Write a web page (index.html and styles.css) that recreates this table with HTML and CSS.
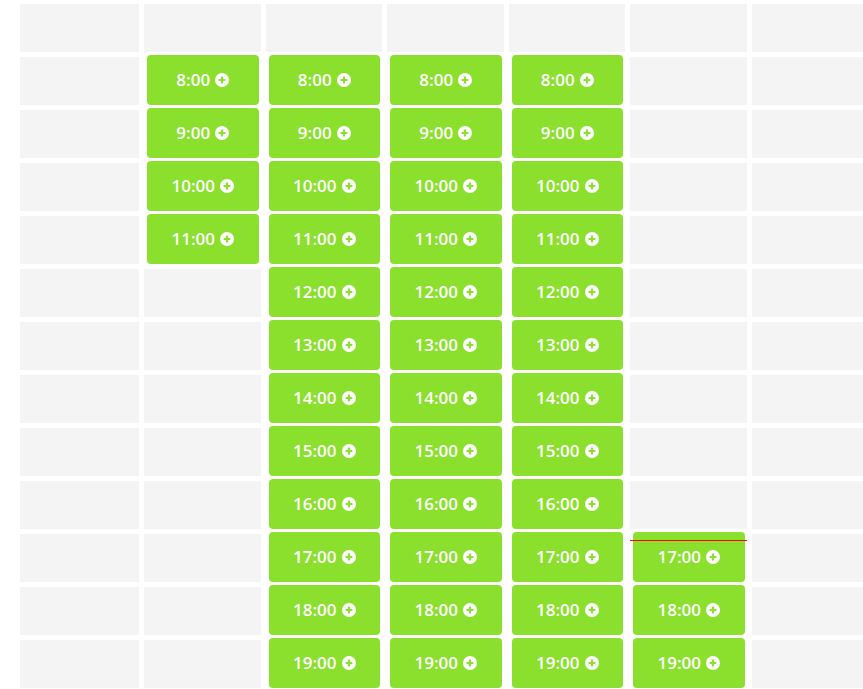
FILE: index.html
```html
<!DOCTYPE html>
<html lang="en">
<head>
<meta charset="utf-8">
<title>Schedule</title>
<link rel="stylesheet" href="styles.css">
</head>
<body>
<div class="grid">
  <!-- header row -->
  <div class="cell"></div><div class="cell"></div><div class="cell"></div><div class="cell"></div><div class="cell"></div><div class="cell"></div><div class="cell"></div>

  <!-- 8:00 -->
  <div class="cell"></div>
  <div class="slot-cell"><button class="slot">8:00 <svg class="plus" viewBox="0 0 14 14"><circle cx="7" cy="7" r="7"/><path d="M7 3.6v6.8M3.6 7h6.8"/></svg></button></div>
  <div class="slot-cell"><button class="slot">8:00 <svg class="plus" viewBox="0 0 14 14"><circle cx="7" cy="7" r="7"/><path d="M7 3.6v6.8M3.6 7h6.8"/></svg></button></div>
  <div class="slot-cell"><button class="slot">8:00 <svg class="plus" viewBox="0 0 14 14"><circle cx="7" cy="7" r="7"/><path d="M7 3.6v6.8M3.6 7h6.8"/></svg></button></div>
  <div class="slot-cell"><button class="slot">8:00 <svg class="plus" viewBox="0 0 14 14"><circle cx="7" cy="7" r="7"/><path d="M7 3.6v6.8M3.6 7h6.8"/></svg></button></div>
  <div class="cell"></div><div class="cell"></div>

  <!-- 9:00 -->
  <div class="cell"></div>
  <div class="slot-cell"><button class="slot">9:00 <svg class="plus" viewBox="0 0 14 14"><circle cx="7" cy="7" r="7"/><path d="M7 3.6v6.8M3.6 7h6.8"/></svg></button></div>
  <div class="slot-cell"><button class="slot">9:00 <svg class="plus" viewBox="0 0 14 14"><circle cx="7" cy="7" r="7"/><path d="M7 3.6v6.8M3.6 7h6.8"/></svg></button></div>
  <div class="slot-cell"><button class="slot">9:00 <svg class="plus" viewBox="0 0 14 14"><circle cx="7" cy="7" r="7"/><path d="M7 3.6v6.8M3.6 7h6.8"/></svg></button></div>
  <div class="slot-cell"><button class="slot">9:00 <svg class="plus" viewBox="0 0 14 14"><circle cx="7" cy="7" r="7"/><path d="M7 3.6v6.8M3.6 7h6.8"/></svg></button></div>
  <div class="cell"></div><div class="cell"></div>

  <!-- 10:00 -->
  <div class="cell"></div>
  <div class="slot-cell"><button class="slot">10:00 <svg class="plus" viewBox="0 0 14 14"><circle cx="7" cy="7" r="7"/><path d="M7 3.6v6.8M3.6 7h6.8"/></svg></button></div>
  <div class="slot-cell"><button class="slot">10:00 <svg class="plus" viewBox="0 0 14 14"><circle cx="7" cy="7" r="7"/><path d="M7 3.6v6.8M3.6 7h6.8"/></svg></button></div>
  <div class="slot-cell"><button class="slot">10:00 <svg class="plus" viewBox="0 0 14 14"><circle cx="7" cy="7" r="7"/><path d="M7 3.6v6.8M3.6 7h6.8"/></svg></button></div>
  <div class="slot-cell"><button class="slot">10:00 <svg class="plus" viewBox="0 0 14 14"><circle cx="7" cy="7" r="7"/><path d="M7 3.6v6.8M3.6 7h6.8"/></svg></button></div>
  <div class="cell"></div><div class="cell"></div>

  <!-- 11:00 -->
  <div class="cell"></div>
  <div class="slot-cell"><button class="slot">11:00 <svg class="plus" viewBox="0 0 14 14"><circle cx="7" cy="7" r="7"/><path d="M7 3.6v6.8M3.6 7h6.8"/></svg></button></div>
  <div class="slot-cell"><button class="slot">11:00 <svg class="plus" viewBox="0 0 14 14"><circle cx="7" cy="7" r="7"/><path d="M7 3.6v6.8M3.6 7h6.8"/></svg></button></div>
  <div class="slot-cell"><button class="slot">11:00 <svg class="plus" viewBox="0 0 14 14"><circle cx="7" cy="7" r="7"/><path d="M7 3.6v6.8M3.6 7h6.8"/></svg></button></div>
  <div class="slot-cell"><button class="slot">11:00 <svg class="plus" viewBox="0 0 14 14"><circle cx="7" cy="7" r="7"/><path d="M7 3.6v6.8M3.6 7h6.8"/></svg></button></div>
  <div class="cell"></div><div class="cell"></div>

  <!-- 12:00 -->
  <div class="cell"></div><div class="cell"></div>
  <div class="slot-cell"><button class="slot">12:00 <svg class="plus" viewBox="0 0 14 14"><circle cx="7" cy="7" r="7"/><path d="M7 3.6v6.8M3.6 7h6.8"/></svg></button></div>
  <div class="slot-cell"><button class="slot">12:00 <svg class="plus" viewBox="0 0 14 14"><circle cx="7" cy="7" r="7"/><path d="M7 3.6v6.8M3.6 7h6.8"/></svg></button></div>
  <div class="slot-cell"><button class="slot">12:00 <svg class="plus" viewBox="0 0 14 14"><circle cx="7" cy="7" r="7"/><path d="M7 3.6v6.8M3.6 7h6.8"/></svg></button></div>
  <div class="cell"></div><div class="cell"></div>

  <!-- 13:00 -->
  <div class="cell"></div><div class="cell"></div>
  <div class="slot-cell"><button class="slot">13:00 <svg class="plus" viewBox="0 0 14 14"><circle cx="7" cy="7" r="7"/><path d="M7 3.6v6.8M3.6 7h6.8"/></svg></button></div>
  <div class="slot-cell"><button class="slot">13:00 <svg class="plus" viewBox="0 0 14 14"><circle cx="7" cy="7" r="7"/><path d="M7 3.6v6.8M3.6 7h6.8"/></svg></button></div>
  <div class="slot-cell"><button class="slot">13:00 <svg class="plus" viewBox="0 0 14 14"><circle cx="7" cy="7" r="7"/><path d="M7 3.6v6.8M3.6 7h6.8"/></svg></button></div>
  <div class="cell"></div><div class="cell"></div>

  <!-- 14:00 -->
  <div class="cell"></div><div class="cell"></div>
  <div class="slot-cell"><button class="slot">14:00 <svg class="plus" viewBox="0 0 14 14"><circle cx="7" cy="7" r="7"/><path d="M7 3.6v6.8M3.6 7h6.8"/></svg></button></div>
  <div class="slot-cell"><button class="slot">14:00 <svg class="plus" viewBox="0 0 14 14"><circle cx="7" cy="7" r="7"/><path d="M7 3.6v6.8M3.6 7h6.8"/></svg></button></div>
  <div class="slot-cell"><button class="slot">14:00 <svg class="plus" viewBox="0 0 14 14"><circle cx="7" cy="7" r="7"/><path d="M7 3.6v6.8M3.6 7h6.8"/></svg></button></div>
  <div class="cell"></div><div class="cell"></div>

  <!-- 15:00 -->
  <div class="cell"></div><div class="cell"></div>
  <div class="slot-cell"><button class="slot">15:00 <svg class="plus" viewBox="0 0 14 14"><circle cx="7" cy="7" r="7"/><path d="M7 3.6v6.8M3.6 7h6.8"/></svg></button></div>
  <div class="slot-cell"><button class="slot">15:00 <svg class="plus" viewBox="0 0 14 14"><circle cx="7" cy="7" r="7"/><path d="M7 3.6v6.8M3.6 7h6.8"/></svg></button></div>
  <div class="slot-cell"><button class="slot">15:00 <svg class="plus" viewBox="0 0 14 14"><circle cx="7" cy="7" r="7"/><path d="M7 3.6v6.8M3.6 7h6.8"/></svg></button></div>
  <div class="cell"></div><div class="cell"></div>

  <!-- 16:00 -->
  <div class="cell"></div><div class="cell"></div>
  <div class="slot-cell"><button class="slot">16:00 <svg class="plus" viewBox="0 0 14 14"><circle cx="7" cy="7" r="7"/><path d="M7 3.6v6.8M3.6 7h6.8"/></svg></button></div>
  <div class="slot-cell"><button class="slot">16:00 <svg class="plus" viewBox="0 0 14 14"><circle cx="7" cy="7" r="7"/><path d="M7 3.6v6.8M3.6 7h6.8"/></svg></button></div>
  <div class="slot-cell"><button class="slot">16:00 <svg class="plus" viewBox="0 0 14 14"><circle cx="7" cy="7" r="7"/><path d="M7 3.6v6.8M3.6 7h6.8"/></svg></button></div>
  <div class="cell"></div><div class="cell"></div>

  <!-- 17:00 -->
  <div class="cell"></div><div class="cell"></div>
  <div class="slot-cell"><button class="slot">17:00 <svg class="plus" viewBox="0 0 14 14"><circle cx="7" cy="7" r="7"/><path d="M7 3.6v6.8M3.6 7h6.8"/></svg></button></div>
  <div class="slot-cell"><button class="slot">17:00 <svg class="plus" viewBox="0 0 14 14"><circle cx="7" cy="7" r="7"/><path d="M7 3.6v6.8M3.6 7h6.8"/></svg></button></div>
  <div class="slot-cell"><button class="slot">17:00 <svg class="plus" viewBox="0 0 14 14"><circle cx="7" cy="7" r="7"/><path d="M7 3.6v6.8M3.6 7h6.8"/></svg></button></div>
  <div class="slot-cell now"><button class="slot">17:00 <svg class="plus" viewBox="0 0 14 14"><circle cx="7" cy="7" r="7"/><path d="M7 3.6v6.8M3.6 7h6.8"/></svg></button><span class="now-line"></span></div>
  <div class="cell"></div>

  <!-- 18:00 -->
  <div class="cell"></div><div class="cell"></div>
  <div class="slot-cell"><button class="slot">18:00 <svg class="plus" viewBox="0 0 14 14"><circle cx="7" cy="7" r="7"/><path d="M7 3.6v6.8M3.6 7h6.8"/></svg></button></div>
  <div class="slot-cell"><button class="slot">18:00 <svg class="plus" viewBox="0 0 14 14"><circle cx="7" cy="7" r="7"/><path d="M7 3.6v6.8M3.6 7h6.8"/></svg></button></div>
  <div class="slot-cell"><button class="slot">18:00 <svg class="plus" viewBox="0 0 14 14"><circle cx="7" cy="7" r="7"/><path d="M7 3.6v6.8M3.6 7h6.8"/></svg></button></div>
  <div class="slot-cell"><button class="slot">18:00 <svg class="plus" viewBox="0 0 14 14"><circle cx="7" cy="7" r="7"/><path d="M7 3.6v6.8M3.6 7h6.8"/></svg></button></div>
  <div class="cell"></div>

  <!-- 19:00 -->
  <div class="cell"></div><div class="cell"></div>
  <div class="slot-cell"><button class="slot">19:00 <svg class="plus" viewBox="0 0 14 14"><circle cx="7" cy="7" r="7"/><path d="M7 3.6v6.8M3.6 7h6.8"/></svg></button></div>
  <div class="slot-cell"><button class="slot">19:00 <svg class="plus" viewBox="0 0 14 14"><circle cx="7" cy="7" r="7"/><path d="M7 3.6v6.8M3.6 7h6.8"/></svg></button></div>
  <div class="slot-cell"><button class="slot">19:00 <svg class="plus" viewBox="0 0 14 14"><circle cx="7" cy="7" r="7"/><path d="M7 3.6v6.8M3.6 7h6.8"/></svg></button></div>
  <div class="slot-cell"><button class="slot">19:00 <svg class="plus" viewBox="0 0 14 14"><circle cx="7" cy="7" r="7"/><path d="M7 3.6v6.8M3.6 7h6.8"/></svg></button></div>
  <div class="cell"></div>
</div>
</body>
</html>
```
FILE: styles.css
```css
html {
  overflow: hidden;
}

body {
  margin: 0;
  padding: 4px 0 0 20px;
  background: #ffffff;
  font-family: "Open Sans", "Liberation Sans", sans-serif;
}

.grid {
  display: grid;
  grid-template-columns: 119px repeat(6, 116.5px);
  grid-auto-rows: 48px;
  column-gap: 5px;
  row-gap: 5px;
  width: max-content;
}

.cell {
  background: #f4f4f4;
}

.slot-cell {
  position: relative;
  display: flex;
}

.slot {
  flex: 1;
  margin: -2px 2px 0 3px;
  height: 50px;
  border: 0;
  border-radius: 4px;
  background: #8ae02c;
  color: #ffffff;
  font-family: inherit;
  font-size: 17px;
  font-weight: 600;
  display: flex;
  align-items: center;
  justify-content: center;
  gap: 5px;
  padding: 0 0 1px 0;
  cursor: pointer;
}

.plus {
  width: 14px;
  height: 14px;
  flex: none;
}

.plus circle {
  fill: #ffffff;
}

.plus path {
  stroke: #8ae02c;
  stroke-width: 2.2;
  fill: none;
}

.now-line {
  position: absolute;
  left: 0;
  right: 0;
  top: 6px;
  height: 1px;
  background: #ff0000;
}
```
